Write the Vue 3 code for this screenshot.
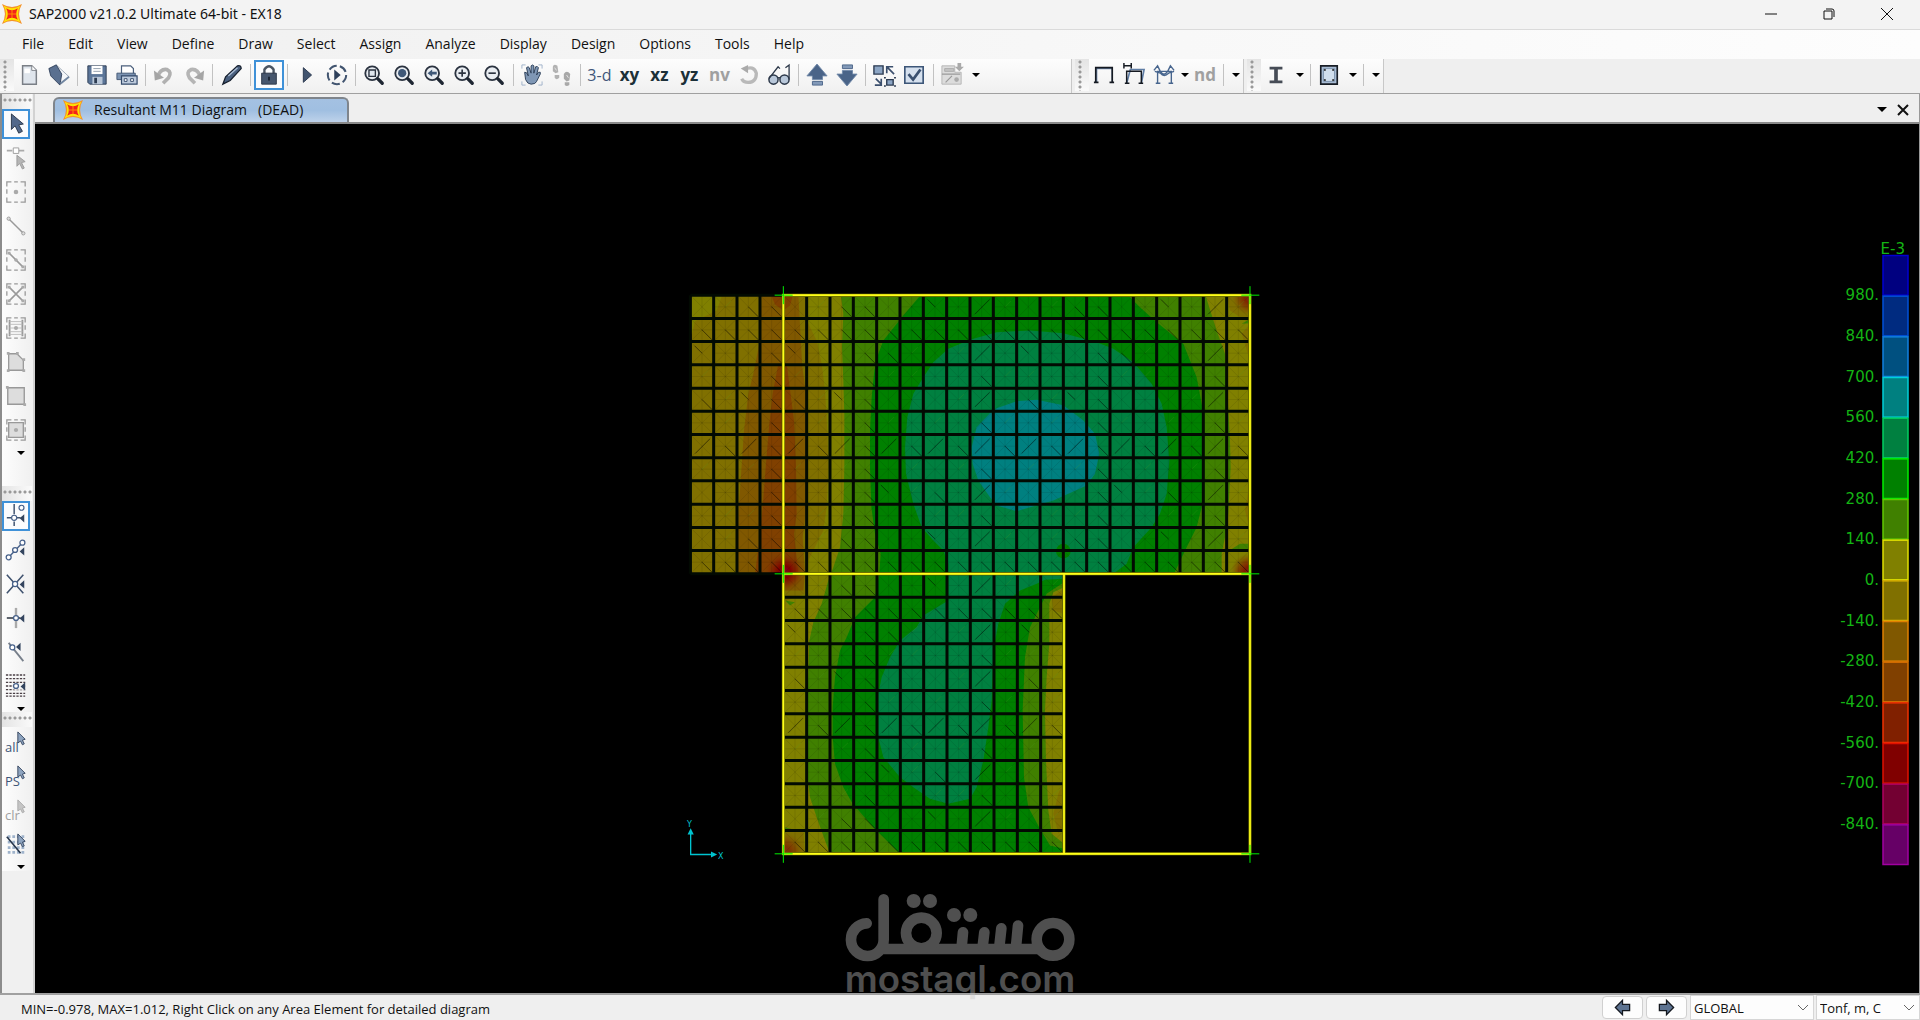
<script setup>
const menus = ['File', 'Edit', 'View', 'Define', 'Draw', 'Select', 'Assign', 'Analyze', 'Display', 'Design', 'Options', 'Tools', 'Help']

const lens = '<circle cx="10" cy="10" r="7.5" fill="#e9edf2" stroke="#2b3340" stroke-width="2"/><path d="M16 16l5 5" stroke="#1f2733" stroke-width="3.6" stroke-linecap="round"/>'
const arrowPtr = '<path d="M14 1v12l3-2 2 4 2-1-2-4 3-1z" fill="#8ea4bf" stroke="#33445e"/>'
const box = '<path d="M2 6V1h5M10 1h4M17 1h5v5M22 9v5M22 18v5h-5M14 23h-4M7 23H2v-5M2 14V9" fill="none" stroke="#999" stroke-width="1.4"/>'

const icons = {
  app: '<path d="M0 0Q12 7 24 0Q17 12 24 24Q12 17 0 24Q7 12 0 0z" fill="#f5922a"/><path d="M2 2Q12 8 22 2Q16 12 22 22Q12 16 2 22Q8 12 2 2z" fill="#ffe600"/><path d="M5 5q7 5 14 0q-4 7 0 14q-7-5-14 0q4-7 0-14z" fill="#f3221b"/><path d="M12 7v10M7 12h10" stroke="#ff8a00" stroke-width="1.2"/>',
  new: '<path d="M5 2h10l5 5v15H5z" fill="#dfe5ec" stroke="#7a7f86" stroke-width="1.6"/><path d="M15 2v5h5" fill="#fff" stroke="#7a7f86"/><path d="M7 5h6v5H7z" fill="#fff"/>',
  open: '<path d="M1 5L9 1l14 13-9 8z" fill="#f5f7fa" stroke="#9aa6b5"/><path d="M1 5l8-4 6 10-2 12L3 13z" fill="#5a7090" stroke="#33445e"/><path d="M14 21l9-7" stroke="#7287a2" stroke-width="2"/>',
  save: '<path d="M2 2h20v20H4l-2-2z" fill="#5b7598" stroke="#2c3b52"/><path d="M6 2h12v9H6z" fill="#fff"/><path d="M8 5h8M8 8h8" stroke="#8d99a8"/><path d="M7 14h11v8H7z" fill="#b8c6d8"/><path d="M9 15h3v6H9z" fill="#2c3b52"/>',
  print: '<path d="M6 2h10l3 3v7H6z" fill="#fff" stroke="#4b5f7c" stroke-width="1.3"/><path d="M1 10h20v7H1z" fill="#7b93b2" stroke="#435773"/><path d="M6 13h17v9H6z" fill="#bccadc" stroke="#33496a" stroke-width="1.3"/><path d="M9 16h3v3H9zM16 16h3v3h-3z" fill="#fff" stroke="#33496a"/>',
  undo: '<path d="M5 14Q8 5 15 6Q21 9 17 15L11 21" fill="none" stroke="#b0b0b0" stroke-width="4"/><path d="M1 7l1 11 10-3z" fill="#a5a5a5"/>',
  redo: '<path d="M19 14Q16 5 9 6Q3 9 7 15l6 6" fill="none" stroke="#b5b5b5" stroke-width="4"/><path d="M23 7l-1 11-10-3z" fill="#a5a5a5"/>',
  pen: '<path d="M2 22l3-8L18 2q4-1 4 3L10 18z" fill="#4a607f" stroke="#17202e" stroke-width="1.4"/><path d="M8 13L18 4" stroke="#a9bcd4" stroke-width="1.5"/>',
  lock: '<path d="M7 11V6q5-7 10 0v5" fill="none" stroke="#4b5563" stroke-width="2.6"/><path d="M4 10h16v12H4z" fill="#46566e" stroke="#2a3546"/><path d="M12 14v4" stroke="#16202e" stroke-width="2"/>',
  play: '<path d="M8 4v16l9-8z" fill="#41546f" stroke="#26354b"/>',
  cplay: '<circle cx="12" cy="12" r="10" fill="none" stroke="#41546f" stroke-width="2.2" stroke-dasharray="9 3.5"/><path d="M9 6v12l7-6z" fill="#2d3f5a"/>',
  zbox: lens + '<path d="M6.500 6.500h7v7h-7z" fill="#dfe6ee" stroke="#2b3340" stroke-width="1.500"/>',
  zfull: lens + '<circle cx="10" cy="10" r="4.500" fill="#3f5878"/>',
  zprev: lens + '<path d="M5 10l5-4v2.500h5v3h-5V14z" fill="#3f5878"/>',
  zin: lens + '<path d="M10 6v8M6 10h8" stroke="#2b3340" stroke-width="1.800"/>',
  zout: lens + '<path d="M6 10h8" stroke="#2b3340" stroke-width="1.800"/>',
  hand: '<path d="M1 5V1h4M19 1h4v4M23 19v4h-4M5 23H1v-4" fill="none" stroke="#9cb0c8"/><path d="M4 9q2-1 4 4L6 4q2-2 3 0l2 6V2q2-2 3 0v8l2-7q2-1 3 1l-2 8 2-3q3-1 2 2l-4 8q-1 3-6 3-4 0-6-5z" fill="#7f97b5" stroke="#293b54"/>',
  feet: '<path d="M2 3Q3-1 7 2L8 9 5 10 2 8zM4 12h5v3q-3 3-5 0z" fill="#b2b2b2"/><path d="M14 11q3-5 7 0l-1 7-3 1-3-3zM15 20h5v3q-3 2-5 0z" fill="#a8a8a8"/><path d="M4 4l2 3M17 12l2 3" stroke="#e8e8e8"/>',
  rot: '<path d="M7 6q10-5 13 4 0 10-9 10-5 0-7-4" fill="none" stroke="#b9b9b9" stroke-width="3.600"/><path d="M3 5l8-4v9z" fill="#aaa"/>',
  glasses: '<circle cx="6" cy="17" r="5" fill="#b9c8da" stroke="#2b3748" stroke-width="1.600"/><circle cx="18" cy="17" r="5" fill="#b9c8da" stroke="#2b3748" stroke-width="1.600"/><path d="M1 16L11 3l2 2M23 17V1l-4 3M11 15h2" fill="none" stroke="#2b3748" stroke-width="1.400"/>',
  up: '<path d="M12 0l11 13h-5v4H7v-4H1z" fill="#4a6488" stroke="#7189a8"/><path d="M7 19h11v4H7z" fill="#8299b8" stroke="#4a6488"/>',
  down: '<path d="M12 24L1 11h6V7h11v4h5z" fill="#4a6488" stroke="#7189a8"/><path d="M7 1h11v4H7z" fill="#8299b8" stroke="#4a6488"/>',
  shrink: '<path d="M1 2h10v9H1zM15 17h7v6h-7z" fill="#8ca5c4" stroke="#2b3a50" stroke-width="1.500"/><path d="M23 11l-7-7M15 10V3h7M3 16l6 6M9 16v7H2" fill="none" stroke="#3b4f6d" stroke-width="1.800"/><path d="M12 15h2M23 15h2M12 24h2M23 24h2" stroke="#2b3a50" stroke-width="1.500"/>',
  check: '<path d="M2 3h20v18H2z" fill="#d5e0ee" stroke="#3d5678" stroke-width="1.800"/><path d="M6 11l5 6 8-11" fill="none" stroke="#3a5070" stroke-width="3"/>',
  assign: '<path d="M1 2h14v7h7v13H1z" fill="#dcdcdc" stroke="#b5b5b5"/><path d="M4 5h10v3H4z" fill="#c4c4c4" stroke="#aaa"/><path d="M5 20l7-7M1 11h20" stroke="#999" stroke-width="1.300"/><circle cx="17" cy="17" r="2.500" fill="#aaa"/><path d="M18-1h4v4h3l-5 5-5-5h3z" fill="#aaa"/>',
  portal: '<path d="M4 20V5h17v15" fill="none" stroke="#6f89ad" stroke-width="1.500"/><path d="M3 20V4h18v16M1 20h5M18 20h5" fill="none" stroke="#151a22" stroke-width="1.800"/>',
  sway: '<path d="M4 21L8 6h15l-3 15" fill="none" stroke="#5f7da5" stroke-width="1.800"/><path d="M4 21V8h16v13M2 21h5M17 21h5M1-1v6M9-1v6M1 2h8" fill="none" stroke="#151a22" stroke-width="1.600"/>',
  moment: '<path d="M5 21V8h15v13M3 21h5M17 21h5M1 7l4-5 3 6q4 6 8 0l3-6 4 5M2 8l6 2q4 5 9 0l6-2" fill="none" stroke="#47658e" stroke-width="1.500"/>',
  ibeam: '<path d="M5 3h14v3h-5v12h5v3H5v-3h5V6H5z" fill="#464c56"/>',
  section: '<path d="M3 2h18v20H3z" fill="#a7bbd3" stroke="#181d25" stroke-width="1.800"/><path d="M6 5h12v14H6z" fill="#d1dfee" stroke="#7d93ad"/><path d="M7 6h1v1H7zM16 6h1v1h-1zM7 17h1v1H7zM16 17h1v1h-1z" fill="#222" stroke="#222"/>',
  pointer: '<path d="M7 1v17l4-4 4 8 4-2-4-7 5-1z" fill="#52688a" stroke="#273447"/>',
  reshape: '<path d="M2 4h6M15 4h6" stroke="#aaa" stroke-width="2"/><path d="M9 1h6v6H9z" fill="#fff" stroke="#999"/><path d="M13 9v12l3-3 3 6 2-1-3-6 4-1z" fill="#b5b5b5" stroke="#999"/>',
  joint: box + '<circle cx="12" cy="12" r="2.500" fill="#aaa"/>',
  line: '<path d="M4 4l16 16" stroke="#999" stroke-width="1.600"/><circle cx="4" cy="4" r="1.800" fill="#ddd" stroke="#999"/><circle cx="20" cy="20" r="1.800" fill="#ddd" stroke="#999"/>',
  qline: box + '<path d="M4 4l16 16" stroke="#999" stroke-width="1.700"/><circle cx="12" cy="12" r="2" fill="#aaa"/><path d="M3 3h3v3H3zM18 18h3v3h-3z" fill="#aaa"/>',
  brace: box + '<path d="M4 4l16 16M20 4L4 20" stroke="#999" stroke-width="1.700"/><path d="M3 3h3v3H3zM18 18h3v3h-3zM18 3h3v3h-3zM3 18h3v3H3z" fill="#aaa"/>',
  beams: box + '<path d="M5 3v18M19 3v18" stroke="#999" stroke-width="2"/><path d="M5 5h14M5 8h14M5 12h14M5 16h14M5 19h14" stroke="#bbb"/><circle cx="12" cy="12" r="2.200" fill="#aaa"/>',
  poly: '<path d="M4 3h9l7 7v11H4z" fill="#ddd" stroke="#999" stroke-width="1.400"/><path d="M2 1h3v3H2zM12 1h3v3h-3zM19 8h3v3h-3zM19 20h3v3h-3zM2 20h3v3H2z" fill="#aaa"/>',
  rect: '<path d="M3 3h18v18H3z" fill="#ddd" stroke="#999" stroke-width="1.500"/><path d="M1 1h3v3H1zM20 20h3v3h-3z" fill="#aaa"/>',
  qrect: box + '<path d="M4 4h16v16H4z" fill="#ddd" stroke="#999" stroke-width="1.500"/><circle cx="12" cy="12" r="2.300" fill="#aaa"/>',
  snap1: '<path d="M10-1v11M10 18v5M2 14h5M13 14h4" stroke="#40536f" stroke-width="1.600"/><circle cx="10" cy="14" r="2.800" fill="#fff" stroke="#47618a" stroke-width="1.300"/><circle cx="18" cy="3" r="2.700" fill="#fff" stroke="#47618a" stroke-width="1.300"/><path d="M21 10v9l-5-4.500z" fill="#33445e"/>',
  snap2: '<path d="M3 21L19 4" stroke="#47618a" stroke-width="1.500"/><circle cx="4" cy="20" r="2.700" fill="#fff" stroke="#47618a" stroke-width="1.400"/><circle cx="11" cy="12" r="2.700" fill="#fff" stroke="#47618a" stroke-width="1.400"/><circle cx="19" cy="4" r="2.700" fill="#fff" stroke="#47618a" stroke-width="1.400"/><path d="M21 9v9l-5-4.500z" fill="#33445e"/>',
  snap3: '<path d="M2 2l18 20M20 2L2 22" stroke="#40536f" stroke-width="1.700"/><circle cx="11" cy="12" r="2.800" fill="#fff" stroke="#47618a" stroke-width="1.400"/><path d="M21 8v9l-5-4.500z" fill="#33445e"/>',
  snap4: '<path d="M12 1v22" stroke="#aaa" stroke-width="2.600"/><path d="M2 12h15" stroke="#333c48" stroke-width="1.700"/><circle cx="12" cy="12" r="2.700" fill="#fff" stroke="#47618a" stroke-width="1.400"/><path d="M21 8v9l-5-4.500z" fill="#33445e"/>',
  snap5: '<path d="M4 2l16 20" stroke="#777f8a" stroke-width="2"/><circle cx="8" cy="7" r="2.700" fill="#fff" stroke="#47618a" stroke-width="1.400"/><path d="M17 2v9l-5-4.500z" fill="#33445e"/>',
  snap6: '<path d="M1 0h21M1 4h21M1 8h21M1 12h21M1 16h21M1 20h21M1 23h21" stroke="#4a3f45" stroke-width="1.500" stroke-dasharray="2.500 1.300"/><path d="M9 9h13v7H9z" fill="#f4f4f4"/><circle cx="12" cy="12" r="2.700" fill="#fff" stroke="#47618a" stroke-width="1.400"/><path d="M22 8v9l-5-4.500z" fill="#33445e"/>',
  all: arrowPtr,
  ps: arrowPtr,
  clr: '<path d="M14 1v12l3-2 2 4 2-1-2-4 3-1z" fill="#c5c5c5" stroke="#aaa"/>',
  inter: '<path d="M3 4h18M3 10h18M3 16h18M3 21h18" stroke="#9fb3cb" stroke-width="3" stroke-dasharray="3 2"/><path d="M2 4l15 18" stroke="#26354b" stroke-width="1.800"/>' + arrowPtr,
  prev: '<path d="M3 12l9-9v5h9v8h-9v5z" fill="#5d7391" stroke="#14181f" stroke-width="1.600"/>',
  next: '<path d="M21 12l-9-9v5H3v8h9v5z" fill="#5d7391" stroke="#14181f" stroke-width="1.600"/>'
}

const mainTools = ['new', 'open', '|', 'save', 'print', '|', 'undo', 'redo', '|', 'pen', '|', 'lock', '|', 'play', 'cplay', '|', 'zbox', 'zfull', 'zprev', 'zin', 'zout', '|', 'hand', 'feet', '|', '3-d', 'xy', 'xz', 'yz', 'nv', 'rot', 'glasses', '|', 'up', 'down', '|', 'shrink', 'check', '|', 'assign']

const railGroups = [
  { name: 'draw', items: ['pointer', 'reshape', 'joint', 'line', 'qline', 'brace', 'beams', 'poly', 'rect', 'qrect'] },
  { name: 'snap', items: ['snap1', 'snap2', 'snap3', 'snap4', 'snap5', 'snap6'] },
  { name: 'select', items: ['all', 'ps', 'clr', 'inter'] }
]
const railText = { all: 'all', ps: 'PS', clr: 'clr' }
const active = ['pointer', 'snap1']

const legend = [
  ['#000080', '#0000d0', '980.'], ['#002b80', '#0050d8', '840.'], ['#005080', '#1080e0', '700.'],
  ['#008080', '#00d0d8', '560.'], ['#008040', '#00d060', '420.'], ['#008000', '#00f000', '280.'],
  ['#408000', '#60c800', '140.'], ['#808000', '#e0e000', '0.'], ['#807000', '#d8b000', '-140.'],
  ['#805800', '#e08000', '-280.'], ['#804000', '#d87000', '-420.'], ['#802000', '#f03000', '-560.'],
  ['#800000', '#e01000', '-700.'], ['#730032', '#b00060', '-840.'], ['#660066', '#a000a0', '']
]
const legendTop = 255
const legendStep = 610 / 15

// Mesh lines of the slab, in thirds of a pixel from the slab's origin
const steps = (from, to, n) => Array.from({ length: n + 1 }, (_, i) => Math.round(from + ((to - from) * i) / n))
const flapX = steps(61, 340, 4)
const upX = steps(340, 1740, 20)
const upY = steps(44, 880, 12)
const lowX = steps(340, 1182, 12)
const lowY = steps(880, 1720, 12)

let faint = ''
let dark = ''
let light = ''
function mesh(xs, ys) {
  for (let i = 0; i < xs.length - 1; i++) {
    for (let j = 0; j < ys.length - 1; j++) {
      const [a, b, c, d] = [xs[i] + 5, ys[j] + 5, xs[i + 1] - 5, ys[j + 1] - 5]
      const mx = (a + c) >> 1
      const my = (b + d) >> 1
      const k = (i * 7 + j * 11 + i * j * 3) % 10
      faint += `M${a} ${b}L${c} ${d}M${c} ${b}L${a} ${d}M${mx} ${b}V${d}`
      if (k % 2) faint += `M${a} ${my}H${c}`
      if (k === 1 || k === 4) dark += `M${mx} ${my}L${c} ${d}`
      if (k === 2) dark += `M${a + 8} ${b + 8}L${mx} ${my}`
      if (k === 6) dark += `M${c - 6} ${b + 8}L${a + 10} ${d - 8}`
      if (k === 7 || k === 3) light += `M${mx} ${my}L${c - 12} ${b + 12}`
    }
  }
}
mesh(flapX, upY)
mesh(upX, upY)
mesh(lowX, lowY)

const line = (xs, y1, y2) => xs.map(x => `M${x} ${y1}V${y2}`).join('')
const row = (ys, x1, x2) => ys.map(y => `M${x1} ${y}H${x2}`).join('')
const grid = line(flapX, 44, 880) + line(upX, 44, 880) + line(lowX, 880, 1720) + row(upY, 61, 1740) + row(lowY, 340, 1182)
const frame = 'M340 44H1740V1720H340ZM340 880H1740M1182 880V1720'
const nodes = [[340, 44], [1740, 44], [340, 880], [1740, 880], [340, 1720], [1740, 1720]]
</script>

<template>
  <div class="app">
    <header class="title">
      <svg class="logo" viewBox="0 0 24 24" v-html="icons.app"></svg>
      <h1>SAP2000 v21.0.2 Ultimate 64-bit - EX18</h1>
      <button aria-label="Minimize"><svg viewBox="0 0 12 12"><path d="M0 6h12" /></svg></button>
      <button aria-label="Restore"><svg viewBox="0 0 12 12"><path d="M1 3h8v8H1zM3 1h6q2 0 2 2v6" /></svg></button>
      <button aria-label="Close"><svg viewBox="0 0 12 12"><path d="M0 0l12 12M12 0L0 12" /></svg></button>
    </header>

    <nav class="menu">
      <button v-for="m in menus" :key="m">{{ m }}</button>
    </nav>

    <div class="toolbars">
      <div class="toolbar wide">
        <span class="grip"></span>
        <div class="tools">
          <template v-for="(t, i) in mainTools" :key="i">
            <span v-if="t === '|'" class="sep"></span>
            <button v-else class="tool" :class="{ active: t === 'lock' }" :aria-label="t">
              <svg v-if="icons[t]" viewBox="0 0 24 24" v-html="icons[t]"></svg>
              <span v-else :class="['word', { thin: t === '3-d', off: t === 'nv' }]">{{ t }}</span>
            </button>
          </template>
        </div>
        <button class="drop" aria-label="More"></button>
      </div>
      <div class="toolbar">
        <span class="grip"></span>
        <button class="tool" aria-label="Undeformed"><svg viewBox="0 0 24 24" v-html="icons.portal"></svg></button>
        <button class="tool" aria-label="Deformed"><svg viewBox="0 0 24 24" v-html="icons.sway"></svg></button>
        <button class="tool" aria-label="Forces"><svg viewBox="0 0 24 24" v-html="icons.moment"></svg></button>
        <button class="drop tight" aria-label="Forces menu"></button>
        <button class="tool"><span class="word off">nd</span></button>
        <span class="sep"></span>
        <button class="drop" aria-label="More"></button>
      </div>
      <div class="toolbar">
        <span class="grip"></span>
        <button class="tool" aria-label="Frame section"><svg viewBox="0 0 24 24" v-html="icons.ibeam"></svg></button>
        <button class="drop" aria-label="Frame menu"></button>
        <span class="sep"></span>
        <button class="tool" aria-label="Concrete section"><svg viewBox="0 0 24 24" v-html="icons.section"></svg></button>
        <button class="drop" aria-label="Concrete menu"></button>
        <span class="sep"></span>
        <button class="drop" aria-label="More"></button>
      </div>
    </div>

    <div class="work">
      <aside class="rail">
        <div v-for="g in railGroups" :key="g.name" class="group" :class="g.name">
          <span class="hgrip"></span>
          <button v-for="t in g.items" :key="t" class="railtool" :class="{ active: active.includes(t) }" :aria-label="t">
            <svg viewBox="0 0 24 24" v-html="icons[t]"></svg>
            <span v-if="railText[t]" class="tag" :class="{ off: t === 'clr' }">{{ railText[t] }}</span>
          </button>
          <button class="drop" aria-label="More"></button>
        </div>
      </aside>

      <section class="doc">
        <div class="tabs">
          <button class="tab">
            <svg viewBox="0 0 24 24" v-html="icons.app"></svg>
            <span>Resultant M11 Diagram</span>
            <span>(DEAD)</span>
          </button>
          <button class="drop big" aria-label="Window list"></button>
          <button class="close" aria-label="Close tab"><svg viewBox="0 0 12 12"><path d="M1 1l10 10M11 1L1 11" /></svg></button>
        </div>

        <main class="canvas">
          <svg viewBox="35 124 1884 868">
            <defs>
              <clipPath id="slab"><path d="M64 46H1740V880H1182V1720H340V878H64Z" /></clipPath>
              <radialGradient id="hot">
                <stop offset="0" stop-color="#800030" />
                <stop offset=".3" stop-color="#800000" />
                <stop offset=".6" stop-color="#802000" stop-opacity=".8" />
                <stop offset="1" stop-color="#804000" stop-opacity="0" />
              </radialGradient>
            </defs>
            <g transform="translate(670 280) scale(.33333)">
              <g clip-path="url(#slab)">
                <path fill="#807000" d="M60 40H1740V1720H60Z" />
                <path fill="#808000" d="M60 40H158L140 90L75 122L66 160H60ZM412 40L410 120L440 180L455 250L465 330L472 450L475 560L470 680L460 750L415 840L405 940L350 960L340 1040V1640L400 1650L405 1720H1182V1640L1165 1660L1150 1600L1165 1540L1182 1500V1000L1150 990L1145 950L1182 925V880H1740V750L1725 690L1740 600V240L1715 160L1740 130L1680 90L1670 40Z" />
                <path fill="#805800" d="M275 40H385L388 100L397 260L407 330L410 450L407 700L398 770L405 880L400 930H340V880H203L205 700L212 600L222 450L235 340L250 280L270 180Z" />
                <path fill="#804000" d="M325 250H350L372 420L378 560L380 700L372 760L385 880H255L268 780L278 680L288 550L298 430L308 340Z" />
                <path fill="#408000" d="M512 40L520 100L516 200L520 300L523 400V560L520 700L510 800L490 860L475 900L455 970L430 1025L418 1080L413 1240V1490L420 1550L440 1610L465 1680L480 1720H1182V1690L1145 1660L1135 1590L1128 1440L1125 1290L1130 1190L1138 1090V970L1150 935L1182 920V880H1655V820L1665 770L1675 700L1682 560L1680 480L1672 330L1665 220L1640 150L1605 40Z" />
                <path fill="#008000" d="M755 40L700 105L640 180L625 220L613 270L605 350L600 450V560L604 680L615 760L632 820L628 880L615 950L555 1010L530 1070L510 1110L495 1190L488 1280V1370L495 1450L520 1520L548 1570L610 1640L650 1680L690 1720H1182V1705L1140 1695L1110 1645L1075 1580L1062 1490L1058 1290L1065 1130L1080 1040L1110 980L1130 940L1182 905V880H1512L1550 800L1580 740L1595 680L1597 560V380L1580 290L1540 190L1460 125L1410 80L1370 40Z" />
                <path fill="#008040" d="M900 178L835 205L790 245L760 290L730 340L712 410L705 500L708 580L730 670L755 740L790 780L820 810L835 850V960L760 1005L740 1040L690 1080L660 1130L635 1190L625 1240V1370L640 1430L690 1490L730 1520L780 1555L835 1570L900 1555L920 1520L940 1440L955 1340L965 1260L970 1110L985 1030L1005 970L1050 930L1100 910L1125 898L1182 895V880H1330L1370 850L1390 800L1445 740L1470 700L1490 640L1498 540L1490 440L1475 370L1445 310L1390 245L1330 205L1280 185L1180 158L1080 150L980 155Z" />
                <path fill="#008080" d="M908 550L905 500L920 440L960 398L980 383L1040 362L1100 358L1180 374L1240 420L1275 460L1288 520L1275 580L1250 615L1150 660L1040 692L980 675L960 650L925 600Z" />
                <circle cx="1180" cy="812" r="22" fill="#008000" />
                <path fill="#408000" d="M1670 815L1710 790H1740V810ZM1715 130L1740 115V128ZM345 960L375 965L360 975ZM345 1640L380 1650L345 1655Z" />
                <path fill="#804000" d="M302 40H370L360 75L340 90L315 72Z" />
                <circle cx="343" cy="874" r="60" fill="url(#hot)" />
                <circle cx="1740" cy="52" r="52" fill="url(#hot)" opacity=".65" />
                <circle cx="1740" cy="876" r="58" fill="url(#hot)" opacity=".8" />
                <circle cx="342" cy="1716" r="60" fill="url(#hot)" opacity=".55" />
                <path :d="faint" class="faint" />
                <path :d="light" class="light" />
                <path :d="dark" class="dark" />
              </g>
              <path :d="grid" class="grid" />
              <path :d="frame" class="frame-edge" />
              <path :d="frame" class="frame-core" />
              <path v-for="(n, i) in nodes" :key="i" class="node" :d="`M${n[0] - 26} ${n[1]}h54M${n[0]} ${n[1] - 27}v54`" />
              <path class="axis" d="M62 1652V1722H136M56 1660l6-12 6 12zM125 1716l12 6-12 6z" />
            </g>
            <text class="axis-name" x="687" y="826">Y</text>
            <text class="axis-name" x="718" y="858">X</text>
            <text class="scale" x="1905" y="253">E-3</text>
            <g v-for="(c, i) in legend" :key="i">
              <rect x="1883" :y="legendTop + i * legendStep" width="25" :height="legendStep - 1" :fill="c[0]" :stroke="c[1]" stroke-width="1.500" />
              <text class="scale" x="1879" :y="legendTop + (i + 1) * legendStep + 4">{{ c[2] }}</text>
            </g>
          </svg>
        </main>
      </section>
    </div>

    <footer class="status">
      <p>MIN=-0.978, MAX=1.012, Right Click on any Area Element for detailed diagram</p>
      <button aria-label="Previous"><svg viewBox="0 0 24 24" v-html="icons.prev"></svg></button>
      <button aria-label="Next"><svg viewBox="0 0 24 24" v-html="icons.next"></svg></button>
      <select class="coord" aria-label="Coordinate system"><option>GLOBAL</option></select>
      <select class="units" aria-label="Units"><option>Tonf, m, C</option></select>
    </footer>

    <svg class="mark" viewBox="60 60 720 330">
      <g fill="none" stroke="#c5c5c5" stroke-width="32" stroke-linecap="round">
        <path d="M140 160A49 49 0 1 0 191 209V88M191 237H660" />
        <circle cx="304" cy="189" r="46" />
        <circle cx="699" cy="208" r="49" />
        <path d="M425 230L429 187M488 230L493 187M538 230L544 175M588 230L594 167" />
      </g>
      <g fill="#c5c5c5">
        <circle cx="281" cy="93" r="21" /><circle cx="330" cy="93" r="21" />
        <circle cx="402" cy="135" r="21" /><circle cx="451" cy="135" r="21" />
        <text x="420" y="365" text-anchor="middle">mostaql.com</text>
      </g>
    </svg>
  </div>
</template>

<style>
body { margin: 0; }
</style>

<style scoped>
* { box-sizing: border-box; }
.app {
  position: relative;
  display: flex;
  flex-direction: column;
  height: 100vh;
  background: #efefef;
  color: #111;
  font: 14px/20px "Open Sans", "Noto Sans", sans-serif;
  overflow: hidden;
}
button {
  display: flex;
  align-items: center;
  justify-content: center;
  padding: 0;
  border: 0;
  background: none;
  color: inherit;
  font: inherit;
}
.title {
  display: flex;
  align-items: center;
  height: 30px;
  padding: 0 4px 2px 2px;
  background: #f3f3f3;
  border-bottom: 1px solid #dadada;
}
.logo { width: 20px; height: 20px; margin-right: 7px; }
h1 { flex: 1; margin: 0; font: 400 14px/20px "Noto Sans", sans-serif; }
.title button { width: 58px; height: 27px; }
.title button svg { width: 12px; height: 12px; fill: none; stroke: #111; overflow: visible; }
.menu {
  display: flex;
  gap: 24px;
  height: 29px;
  padding: 0 0 2px 22px;
  background: linear-gradient(90deg, #f0f0f0, #fdfdfd);
}
.toolbars { display: flex; height: 35px; border-bottom: 1px solid #a0a0a0; }
.toolbar {
  display: flex;
  align-items: center;
  padding-bottom: 2px;
  margin-right: 3px;
  background: linear-gradient(#fdfdfd, #f0f0f0);
  border-right: 1px solid #c8c8c8;
}
.wide { width: 1072px; }
.tools { display: flex; width: 953px; }
.tool { width: 30px; height: 30px; }
.tool svg { width: 22px; height: 22px; overflow: visible; }
.active { background: #fbfcfe; border: 2px solid #3f91d8; }
.grip {
  width: 14px;
  height: 100%;
  background: radial-gradient(circle at 5px 3px, #999 1px, transparent 2px) 0 0 / 14px 5px, linear-gradient(#e4e4e4, #fafafa);
}
.sep { flex: 1; display: flex; justify-content: center; align-items: center; min-width: 7px; height: 30px; }
.sep::after { content: ""; width: 1px; height: 22px; background: #c2c2c2; }
.word { color: #1c3038; font-size: 17px; font-weight: 700; }
.thin { color: #40577a; font-size: 16px; font-weight: 400; }
.off { color: #a0a0a0; }
.drop { width: 14px; height: 20px; }
.toolbar .drop { margin-left: 2px; }
.toolbar .drop.tight { margin-left: 0; width: 11px; }
.drop::after { content: ""; border: 4px solid transparent; border-top-color: #000; border-bottom: 0; }
.drop.big::after { border-width: 5px 5px 0; }
.work { flex: 1; display: flex; min-height: 0; }
.rail { width: 35px; border-left: 2px solid #8c8c8c; border-right: 2px solid #d2d2d2; background: #f0f0f0; }
.group { position: relative; width: 30px; background: linear-gradient(90deg, #fdfdfd, #f0f0f0); }
.draw { height: 392px; }
.snap { height: 226px; }
.select { height: 159px; }
.hgrip {
  display: block;
  height: 15px;
  background: radial-gradient(circle at 3px 6px, #999 1px, transparent 2px) 0 0 / 5px 16px, linear-gradient(90deg, #e4e4e4, #fafafa);
}
.railtool { position: relative; width: 28px; height: 30px; margin-bottom: 4px; }
.railtool svg { flex: none; width: 22px; height: 24px; overflow: visible; }
.group > .drop { width: 38px; height: 8px; }
.tag { position: absolute; left: 3px; bottom: 2px; color: #3f5578; font-size: 13px; line-height: 16px; }
.tag.off { color: #a0a0a0; }
.doc { flex: 1; display: flex; flex-direction: column; min-width: 0; border-right: 1px solid #999; }
.tabs { display: flex; align-items: center; height: 30px; padding: 3px 6px 0 18px; border-bottom: 2px solid #8a8a8a; }
.tab {
  justify-content: flex-start;
  gap: 11px;
  width: 296px;
  height: 25px;
  margin-right: auto;
  padding: 0 0 2px 8px;
  border: 2px solid #7f858c;
  border-bottom: 0;
  border-radius: 6px 6px 0 0;
  background: linear-gradient(#a4c1e2, #a0bfe1 50%, #bed2ea);
  font-size: 14px;
}
.tab svg { width: 20px; height: 20px; }
.close { width: 20px; height: 20px; margin-left: 4px; }
.close svg { width: 12px; height: 12px; stroke: #111; stroke-width: 2; }
.canvas { flex: 1; min-height: 0; background: #000; }
.canvas svg { display: block; width: 100%; height: 100%; }
.faint { fill: none; stroke: #000; stroke-width: 2; opacity: .14; }
.dark { fill: none; stroke: #000; stroke-width: 3; opacity: .45; }
.light { fill: none; stroke: #80ff40; stroke-width: 2; opacity: .2; }
.grid { fill: none; stroke: #020a02; stroke-width: 9; }
.frame-edge { fill: none; stroke: #8a8a00; stroke-width: 9; }
.frame-core { fill: none; stroke: #ffff1a; stroke-width: 5; }
.node { stroke: #00f000; stroke-width: 3; }
.axis { fill: none; stroke: #00c4d0; stroke-width: 4; }
.axis-name { fill: #00c4d0; font: 8px "DejaVu Sans", sans-serif; }
.scale { fill: #14b414; font: 15px "DejaVu Sans", sans-serif; text-anchor: end; }
.status { display: flex; align-items: center; height: 27px; border-top: 2px solid #a0a0a0; background: #efefef; font-size: 13px; }
.status p { flex: 1; margin: 0; padding: 3px 0 0 21px; }
.status button { width: 41px; height: 23px; margin-right: 3px; border: 1px solid #d0d0d0; border-radius: 4px; background: #fdfdfd; }
.status button svg { width: 19px; height: 19px; }
.status select {
  height: 25px;
  padding: 0 3px;
  border: 1px solid #d6d6d6;
  border-radius: 0;
  appearance: none;
  background: url("data:image/svg+xml,%3Csvg xmlns='http://www.w3.org/2000/svg' viewBox='0 0 12 8'%3E%3Cpath d='M1 1l5 5 5-5' fill='none' stroke='%23666'/%3E%3C/svg%3E") no-repeat right 4px center / 12px 8px #fdfdfd;
  color: #111;
  font: inherit;
}
.coord { width: 124px; margin-right: 2px; }
.units { width: 104px; }
.mark { position: absolute; left: 50%; bottom: 20px; width: 240px; height: 110px; transform: translateX(-50%); opacity: .4; pointer-events: none; }
.mark text { font: 600 110px Inter, sans-serif; }
</style>
